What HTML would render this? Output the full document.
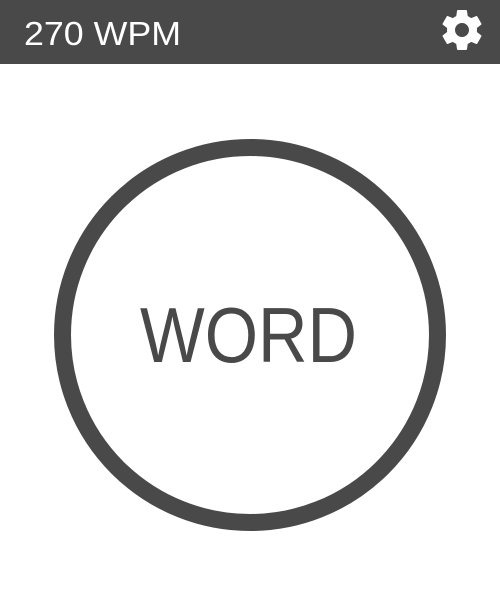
<!DOCTYPE html>
<html><head><style>
html,body{margin:0;padding:0;width:500px;height:600px;background:#fff;overflow:hidden}
</style></head><body>
<svg width="500" height="600" viewBox="0 0 500 600" xmlns="http://www.w3.org/2000/svg" style="display:block">
<rect x="0" y="0" width="500" height="64" fill="#494949"/>
<text x="24" y="45" font-family="Liberation Sans, sans-serif" font-size="33.5" fill="#fff" textLength="157" lengthAdjust="spacingAndGlyphs">270 WPM</text>
<g transform="translate(438,6) scale(2)" fill="#fff">
<path d="M19.43 12.98c.04-.32.07-.64.07-.98s-.03-.66-.07-.98l2.11-1.65c.19-.15.24-.42.12-.64l-2-3.46c-.12-.22-.39-.3-.61-.22l-2.49 1c-.52-.4-1.08-.73-1.69-.98l-.38-2.65C14.460 2.18 14.25 2 14 2h-4c-.25 0-.46.18-.49.42l-.38 2.650c-.61.25-1.17.59-1.69.98l-2.49-1c-.23-.09-.49 0-.61.22l-2 3.46c-.13.22-.07.49.12.64l2.11 1.65c-.04.32-.07.65-.07.98s.03.66.07.98l-2.11 1.65c-.19.15-.24.42-.12.64l2 3.46c.12.22.39.3.61.22l2.49-1c.52.4 1.08.73 1.69.98l.38 2.65c.03.24.24.42.49.42h4c.25 0 .46-.18.49-.42l.38-2.65c.61-.25 1.17-.59 1.690-.98l2.49 1c.23.09.49 0 .61-.22l2-3.46c.12-.22.07-.49-.12-.64l-2.11-1.65zM12 15.5c-1.93 0-3.5-1.57-3.5-3.5s1.57-3.5 3.5-3.5 3.5 1.57 3.5 3.5-1.57 3.5-3.5 3.5z"/>
</g>
<circle cx="250" cy="335" r="187.5" fill="none" stroke="#494949" stroke-width="17"/>
<text x="140" y="362" font-family="Liberation Sans, sans-serif" font-size="78" fill="#494949" textLength="217" lengthAdjust="spacingAndGlyphs">WORD</text>
</svg>
</body></html>
